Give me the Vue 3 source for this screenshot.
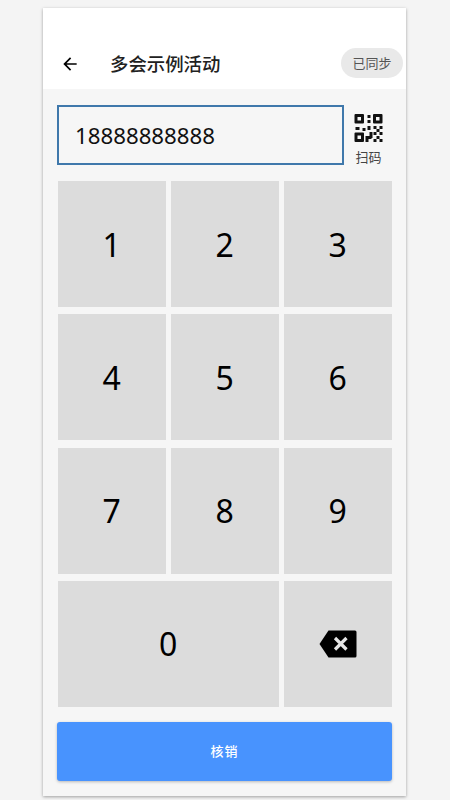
<script setup>
const keys = [
  { label: '1' }, { label: '2' }, { label: '3' },
  { label: '4' }, { label: '5' }, { label: '6' },
  { label: '7' }, { label: '8' }, { label: '9' },
  { label: '0', wide: true }
]
const finder = [[0, 0], [18.500, 0], [0, 18.500]]
const bits = [
  [13, 1, 3, 3], [13, 6, 3, 3],
  [1, 13, 4, 3], [8, 14, 3, 3], [13, 12, 3, 4],
  [19, 12, 3, 3], [25, 12, 3, 3], [22, 15, 3, 3], [19, 18, 3, 3], [25, 18, 3, 3],
  [15, 18, 3, 6], [11, 22, 6, 3], [11, 25, 3, 3], [22, 22, 3, 3], [19, 25, 3, 3], [25, 25, 3, 3]
]
</script>

<template>
  <div class="page">
    <main class="panel">
      <header class="header">
        <svg class="back" viewBox="0 0 24 24" aria-label="返回">
          <path d="M20 11H7.830l5.590-5.590L12 4l-8 8 8 8 1.410-1.410L7.830 13H20z" />
        </svg>
        <h1 class="title">多会示例活动</h1>
        <span class="badge">已同步</span>
      </header>

      <section class="body">
        <div class="input-row">
          <div class="input">18888888888</div>
          <div class="scan">
            <svg class="qr" viewBox="0 0 28 28" aria-label="二维码">
              <g v-for="f in finder" :key="f.join()">
                <path :transform="`translate(${f[0]} ${f[1]})`" fill-rule="evenodd" d="M1 0h7.500a1 1 0 0 1 1 1v7.500a1 1 0 0 1-1 1H1a1 1 0 0 1-1-1V1a1 1 0 0 1 1-1zM3 3v3.500h3.500V3z" />
              </g>
              <rect v-for="b in bits" :key="b.join()" :x="b[0]" :y="b[1]" :width="b[2]" :height="b[3]" />
            </svg>
            <span class="scan-label">扫码</span>
          </div>
        </div>

        <div class="keypad">
          <button v-for="k in keys" :key="k.label" class="key" :class="{ wide: k.wide }">{{ k.label }}</button>
          <button class="key" aria-label="删除">
            <svg class="del" width="38" height="28" viewBox="0 0 38 28">
              <path d="M9.500 0.500H36a1.500 1.500 0 0 1 1.500 1.500V26a1.500 1.500 0 0 1-1.500 1.500H9.500L0.500 14z" fill="#000" />
              <path d="M16 8l11.500 11.500M27.500 8L16 19.500" stroke="#e6e6e6" stroke-width="3.200" fill="none" />
            </svg>
          </button>
        </div>

        <button class="submit">核销</button>
      </section>
    </main>
  </div>
</template>

<style scoped>
.page {
  width: 450px;
  height: 800px;
  box-sizing: border-box;
  padding: 8px 44px 4px 43px;
  background: #f4f4f4;
  font-family: "Noto Sans", "Noto Sans CJK SC", sans-serif;
}
.panel {
  height: 788px;
  background: #f6f6f6;
  box-shadow: 0 1px 3px rgba(0, 0, 0, 0.35);
  display: flex;
  flex-direction: column;
}
.header {
  height: 81px;
  flex: none;
  box-sizing: border-box;
  background: #fff;
  padding: 40px 3px 11px 17px;
  display: flex;
  align-items: center;
}
.back {
  width: 20px;
  height: 20px;
  margin-top: 2px;
  fill: #000;
}
.title {
  margin: 2px 0 0 30px;
  flex: 1;
  font-size: 18.400px;
  line-height: 30px;
  font-weight: 500;
  color: #212121;
}
.badge {
  width: 62px;
  height: 30px;
  border-radius: 15px;
  background: #e9e9e9;
  color: #555;
  font-size: 13px;
  line-height: 30px;
  text-align: center;
}
.body {
  flex: 1;
  padding: 16px 14px 0;
  display: flex;
  flex-direction: column;
}
.input-row {
  display: flex;
  height: 60px;
}
.input {
  width: 287px;
  box-sizing: border-box;
  border: 2px solid #3f78ab;
  padding-left: 16px;
  font-size: 22.250px;
  line-height: 58px;
  color: #111;
}
.scan {
  width: 48px;
  display: flex;
  flex-direction: column;
  align-items: center;
  padding-left: 1px;
  box-sizing: border-box;
}
.qr {
  width: 29px;
  height: 29px;
  margin-top: 9px;
  fill: #111;
}
.scan-label {
  font-size: 13px;
  line-height: 16px;
  margin-top: 7px;
  color: #444;
}
.keypad {
  margin: 16px 0 0 0.500px;
  display: grid;
  grid-template-columns: repeat(3, 1fr);
  grid-auto-rows: 126px;
  column-gap: 4.500px;
  row-gap: 7.300px;
}
.key {
  border: 0;
  padding: 0;
  background: #dcdcdc;
  color: #000;
  font-family: inherit;
  font-size: 32px;
  display: flex;
  align-items: center;
  justify-content: center;
}
.key.wide {
  grid-column: span 2;
}
.del {
  display: block;
}
.submit {
  margin-top: 15px;
  height: 59px;
  padding: 0 0 2px;
  border: 0;
  border-radius: 3px;
  background: #4893fe;
  color: #fff;
  font-family: inherit;
  font-size: 13px;
  letter-spacing: 1px;
  font-weight: 500;
  box-shadow: 0 1px 3px rgba(0, 0, 0, 0.25);
}
</style>
